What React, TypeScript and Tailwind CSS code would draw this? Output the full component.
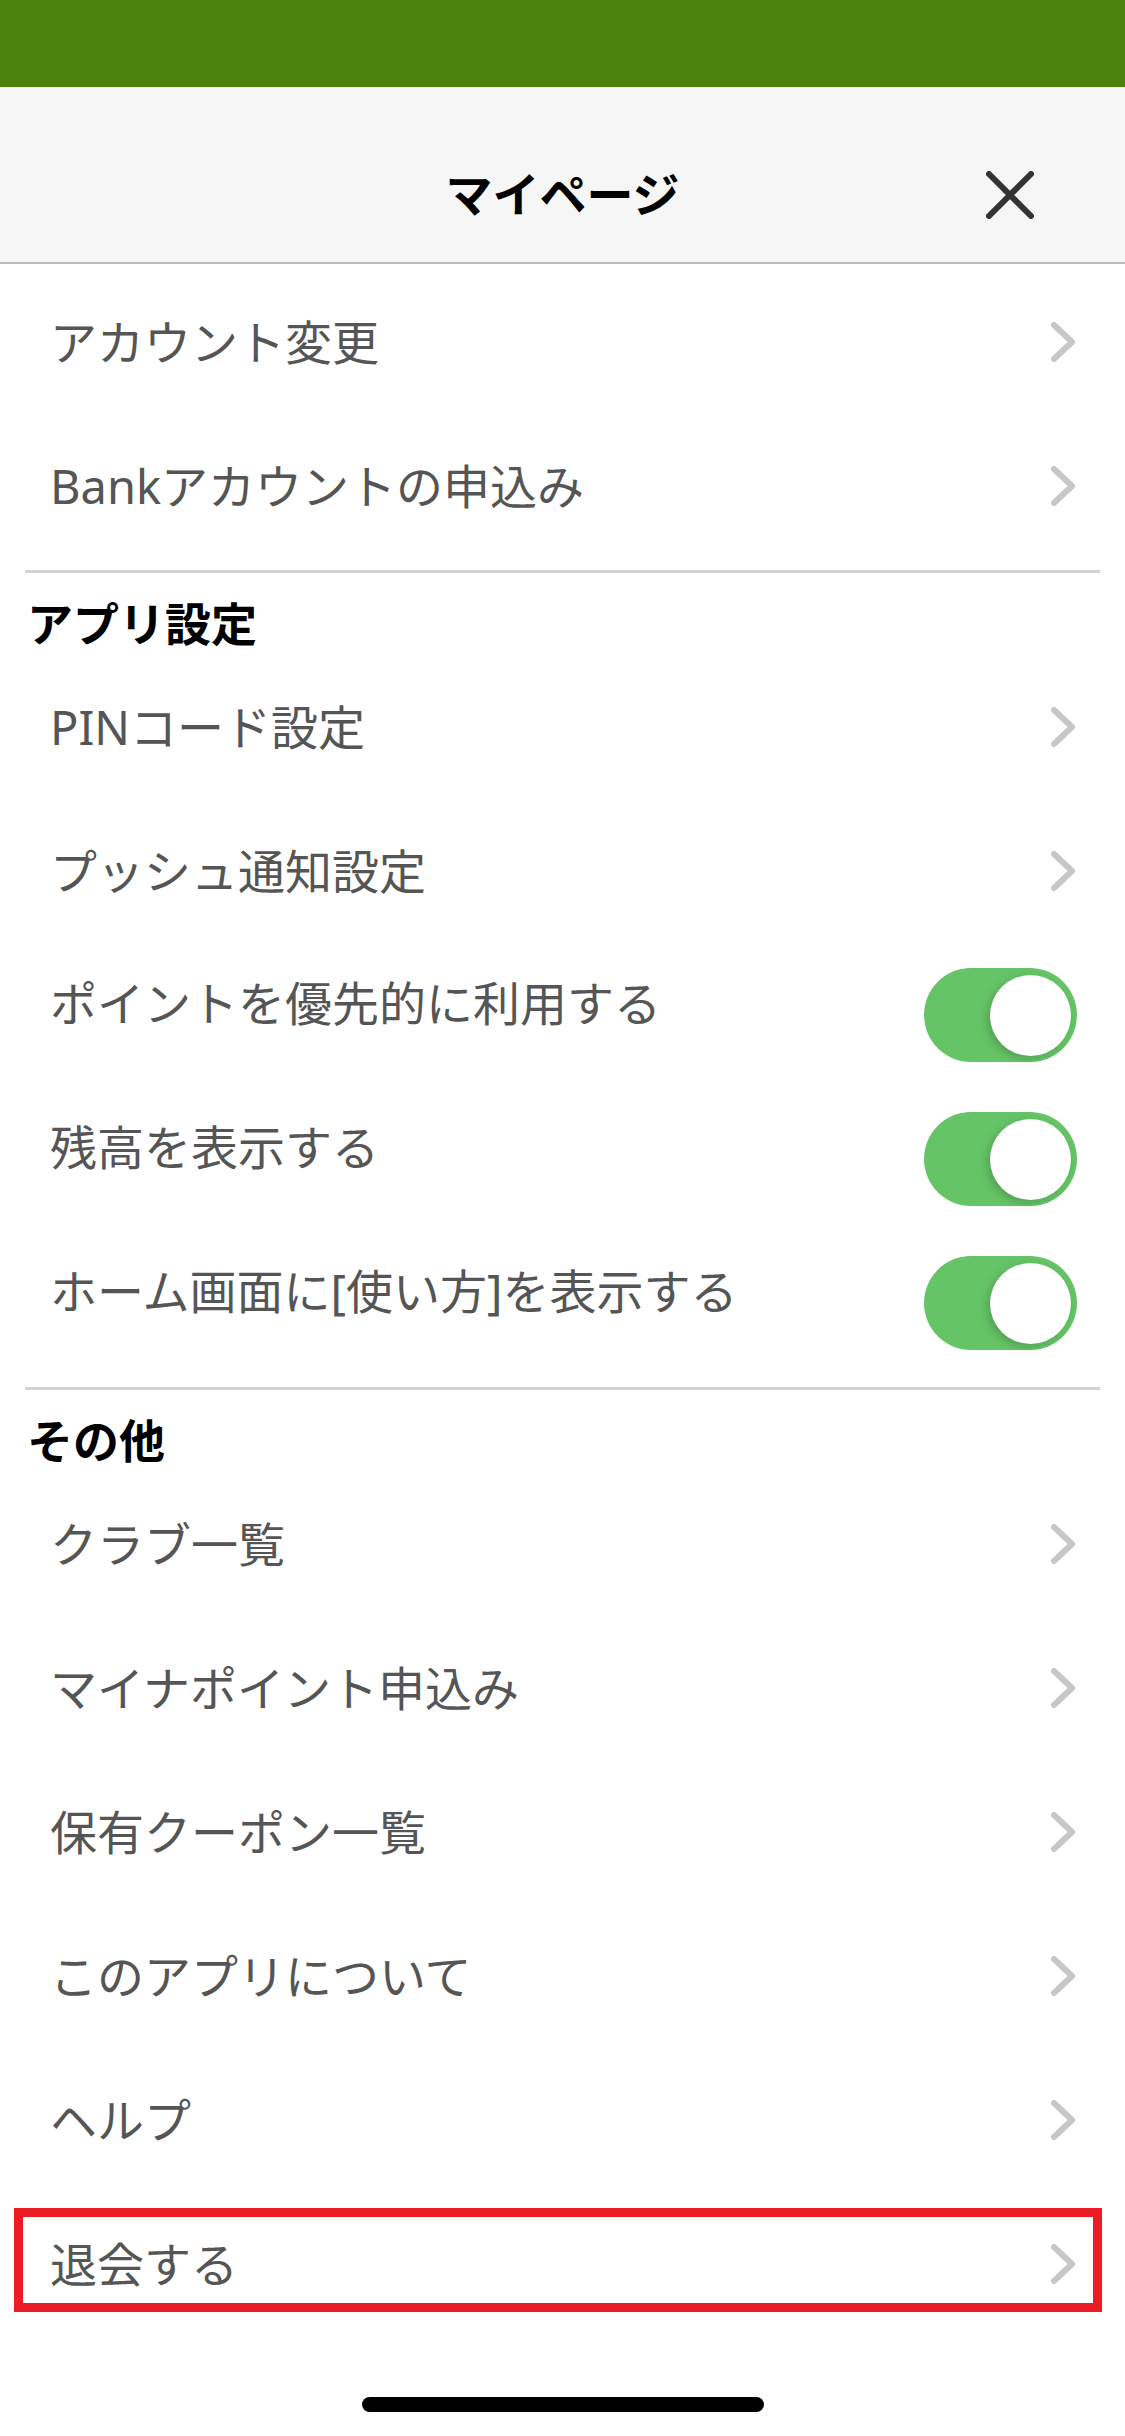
import type { ReactNode } from "react";

const font = "font-['Noto_Sans','Noto_Sans_CJK_JP',sans-serif]";

const Chevron = () => (
  <svg width="27" height="42" viewBox="0 0 27 42" fill="none">
    <polyline
      points="4,4 22,21 4,38"
      stroke="#c7c7c7"
      strokeWidth="6"
      strokeLinecap="round"
      strokeLinejoin="round"
    />
  </svg>
);

const Toggle = () => (
  <div className="relative h-[94px] w-[153px] rounded-full bg-[#65c466]">
    <div className="absolute right-[6px] top-[7px] h-[81px] w-[81px] rounded-full bg-white shadow-[-3px_3px_8px_rgba(0,0,0,0.18)]" />
  </div>
);

const LinkRow = ({ label, children }: { label: string; children?: ReactNode }) => (
  <div className="relative flex h-[144px] items-center justify-between pl-[50px] pr-[48px]">
    <span className="text-[47px] leading-none text-[#555555]">{label}</span>
    <Chevron />
    {children}
  </div>
);

const ToggleRow = ({ label }: { label: string }) => (
  <div className="flex h-[144px] items-center justify-between pl-[50px] pr-[48px]">
    <span className="pb-[24px] text-[47px] leading-none text-[#555555]">{label}</span>
    <Toggle />
  </div>
);

const SectionTitle = ({ title }: { title: string }) => (
  <div className="h-[82px] pl-[27px] pt-[27px]">
    <span className="text-[46px] font-bold leading-[46px] text-black">{title}</span>
  </div>
);

const Divider = () => <div className="mx-[25px] mt-[12px] h-[3px] bg-[#d3d3d3]" />;

export default function App() {
  return (
    <div className={`${font} min-h-[2436px] w-[1125px] bg-white`}>
      <div className="h-[87px] bg-[#4a820c]" />

      <header className="grid h-[177px] grid-cols-[1fr_auto_1fr] items-center border-b-2 border-[#bcbcbc] bg-[#f6f6f6] pt-[40px]">
        <div />
        <h1 className="text-[47px] font-bold leading-none text-black">マイページ</h1>
        <div className="flex justify-end pr-[91px]">
          <svg width="48" height="48" viewBox="0 0 48 48" fill="none">
            <path
              d="M3 3 L45 45 M45 3 L3 45"
              stroke="#333333"
              strokeWidth="6"
              strokeLinecap="round"
            />
          </svg>
        </div>
      </header>

      <div className="pt-[6px]">
        <LinkRow label="アカウント変更" />
        <LinkRow label="Bankアカウントの申込み" />
        <Divider />

        <SectionTitle title="アプリ設定" />
        <LinkRow label="PINコード設定" />
        <LinkRow label="プッシュ通知設定" />
        <ToggleRow label="ポイントを優先的に利用する" />
        <ToggleRow label="残高を表示する" />
        <ToggleRow label="ホーム画面に[使い方]を表示する" />
        <Divider />

        <SectionTitle title="その他" />
        <LinkRow label="クラブ一覧" />
        <LinkRow label="マイナポイント申込み" />
        <LinkRow label="保有クーポン一覧" />
        <LinkRow label="このアプリについて" />
        <LinkRow label="ヘルプ" />
        <LinkRow label="退会する">
          <div className="pointer-events-none absolute bottom-[24px] left-[14px] right-[23px] top-[16px] border-[9px] border-[#ec1c24]" />
        </LinkRow>
      </div>

      <div className="flex justify-center pt-[61px]">
        <div className="h-[15px] w-[402px] rounded-full bg-black" />
      </div>
    </div>
  );
}
